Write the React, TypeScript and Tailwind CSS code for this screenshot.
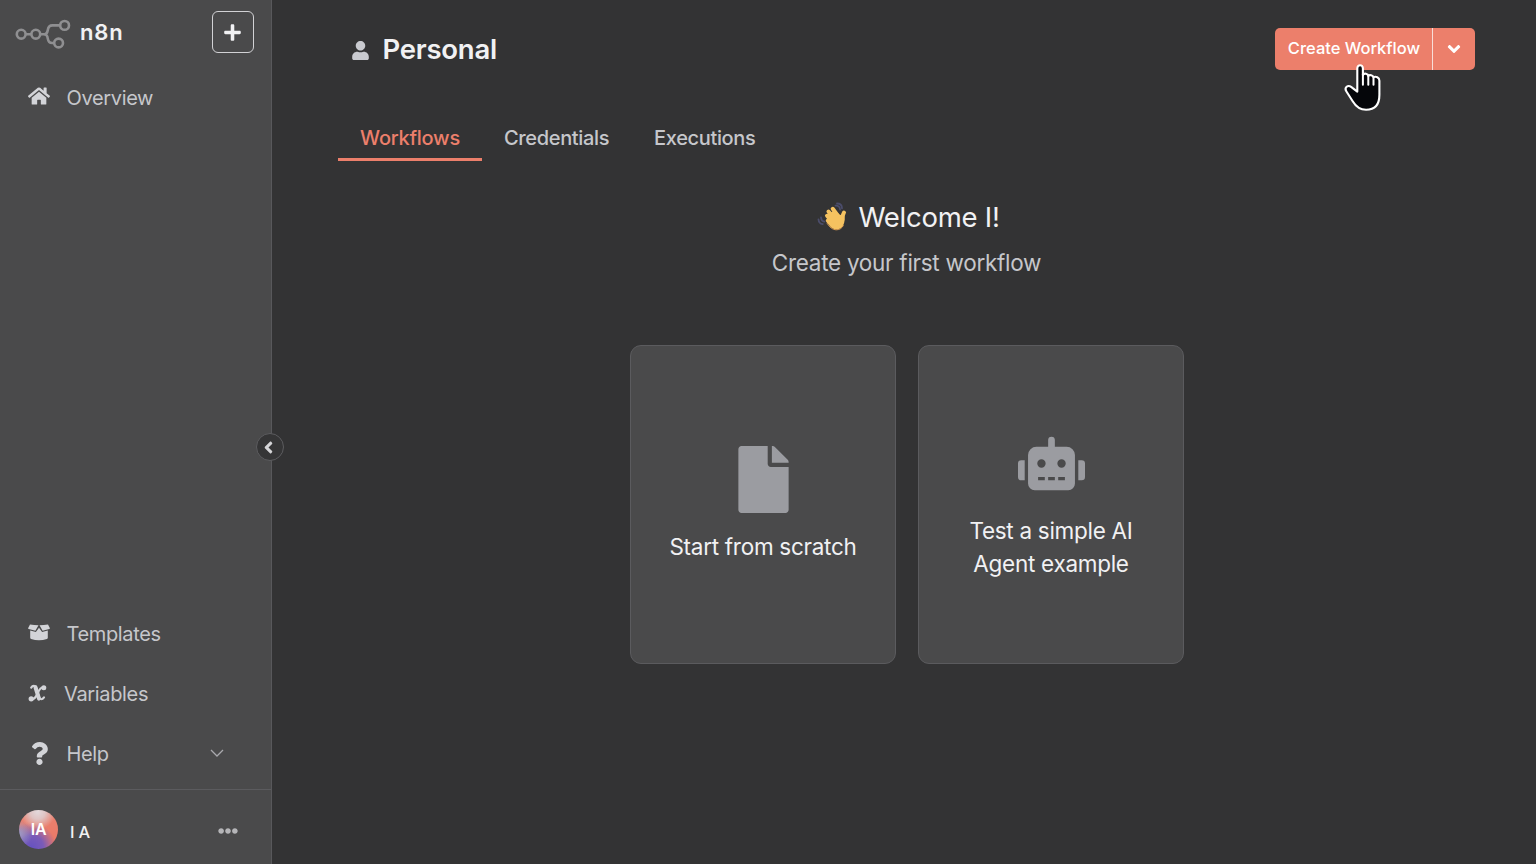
import type { ReactNode } from "react";
import {
  FaHome,
  FaUser,
  FaFile,
  FaRobot,
  FaQuestion,
  FaEllipsisH,
  FaPlus,
  FaAngleDown,
  FaAngleLeft,
} from "react-icons/fa";

function Logo() {
  return (
    <svg width="56" height="30" viewBox="0 0 56 30" fill="none" stroke="#8f8f91" strokeWidth="2.6">
      <circle cx="6.2" cy="15.2" r="4.4" />
      <circle cx="20.8" cy="15.2" r="4.4" />
      <circle cx="49.6" cy="6.4" r="4.4" />
      <circle cx="43.6" cy="24" r="4.4" />
      <path d="M10.6 15.2h5.8M25.2 15.2h4c2.6 0 3.2-1.6 3.6-4.2.4-3 1.700-4.600 4.600-4.600h7.800" />
      <path d="M29.200 15.200c2.600 0 3.200 1.800 3.600 4.400.4 2.900 1.800 4.400 4.400 4.400h2" />
    </svg>
  );
}

function OpenBoxIcon() {
  return (
    <svg width="22" height="17" viewBox="0 0 22 17" fill="currentColor">
      <path d="M2.200 6.600l5.700 1.500L11 3.700l3.100 4.400 5.700-1.500v7.200c0 .6-.3 1-.9 1.200-5.200 1.700-10.600 1.700-15.800 0-.6-.2-.9-.6-.9-1.200z" />
      <path d="M2 .5c2.800.6 5.600.8 8.500.8L7.400 6.700.7 5.100C.2 5 0 4.600.2 4.100zM20 .5c-2.800.6-5.600.8-8.500.8l3.100 5.400 6.700-1.600c.5-.1.700-.5.5-1z" />
    </svg>
  );
}

function VariableIcon() {
  return (
    <svg width="19" height="19" viewBox="0 0 19 19" fill="none" stroke="currentColor" strokeLinecap="round">
      <path d="M3.200 3.600C4.500 1.600 7.300 1 8.300 4l2.700 9c.8 3 3.300 2.800 5 .4" strokeWidth="2.200" />
      <path d="M7.500 3.300l3.500 11.400" strokeWidth="4" />
      <path d="M16 3.400c-3-1-4.500 1.800-6.200 5.600S6.300 16.200 3 15.200" strokeWidth="2.200" />
      <circle cx="15.800" cy="3.800" r="2.500" fill="currentColor" stroke="none" />
      <circle cx="3.200" cy="14.800" r="2.600" fill="currentColor" stroke="none" />
    </svg>
  );
}

function WavingHand() {
  return (
    <svg width="31" height="31" viewBox="0 0 31 31" fill="none">
      <g stroke="#4b4d6b" strokeWidth="1.800" strokeLinecap="round">
        <path d="M18.500 3.600c2.600-.3 4.300 1.200 4.600 4M20 1.500c3.200 0 5 2 5 4.800M1.500 17.500c.2 2.800 1.700 4.300 4.300 4.700M4 15.500c.2 2.600 1.400 3.900 3.400 4.200" />
      </g>
      <g stroke="#f5c260" strokeLinecap="round" strokeWidth="4">
        <path d="M11.500 9.600l8 9M15.700 6.800l7 9.500M10 13.800l7 8M10.800 18.600l6 5.200M27 10.500c-1.500 2-1.300 4.500-1.500 7" />
      </g>
      <path d="M12 12l5.500-4 5.500 5 3.500-1c1.500 5 1.600 9-1.200 12.700-3.200 3.500-8.200 3.600-11.600.2L9.500 20z" fill="#f5c260" />
      <path d="M10.200 21.500c2.300 3.500 5.200 6.300 9.300 6.300 3.200 0 5.600-1.700 6.800-4.300" stroke="#e9a552" strokeWidth=".9" strokeLinecap="round" />
    </svg>
  );
}

function HandCursor() {
  return (
    <svg width="40" height="50" viewBox="0 0 40 50" className="pointer-events-none absolute top-[62px] left-[1343px]">
      <path
        d="M14.300 6c0-4.300 5.600-4.300 5.600 0v6.400c1.200-2 5-1.500 5.400 1 1.300-1.400 4.600-.8 5.200 1.300 2.200-1.200 5.900.1 5.900 3.600v14c0 9.500-4.600 15-13.300 15-6.600 0-10.200-3.200-13.400-8.500L3.300 28.800c-2.300-3.700 1.600-6.800 4.800-4.400l6.200 4.700z"
        transform="translate(0 .5)"
        fill="#05060a"
        stroke="#fff"
        strokeWidth="2.100"
        strokeLinejoin="round"
      />
      <path d="M19.900 12v10.700M25.300 13.400v9.300M30.500 15v7.700" stroke="#fff" strokeWidth="2" strokeLinecap="round" />
    </svg>
  );
}

function NavItem({ icon, label, children }: { icon: ReactNode; label: ReactNode; children?: ReactNode }) {
  return (
    <a className="flex h-[59.500px] items-center pl-[27px] text-[20px] tracking-[-0.35px] text-[#c6c7cb]">
      <span className="flex w-6 shrink-0 justify-center text-[#d3d4d8]">{icon}</span>
      {label}
      {children}
    </a>
  );
}

function Sidebar() {
  return (
    <aside className="flex h-full w-[272px] shrink-0 flex-col border-r border-[#58585b] bg-[#4a4a4b]">
      <header className="flex h-[67px] items-center pl-[15px]">
        <Logo />
        <span className="mt-[-3px] ml-[9px] text-[22px] leading-none font-semibold tracking-[0.8px] text-[#f1f1f3]">n8n</span>
        <button className="mt-[-3px] mr-[17px] ml-auto flex size-[42px] items-center justify-center rounded-md border-[1.500px] border-[#d2d2d5] pr-px text-[#f1f1f3]">
          <FaPlus size={19} />
        </button>
      </header>
      <nav className="pt-px">
        <NavItem icon={<FaHome size={22} className="-mt-[3px]" />} label={<span className="ml-[15.500px]">Overview</span>} />
      </nav>
      <nav className="mt-auto pb-[6px]">
        <NavItem icon={<span className="-mt-[3px]"><OpenBoxIcon /></span>} label={<span className="ml-[15.500px]">Templates</span>} />
        <NavItem icon={<span className="-mt-px -ml-1"><VariableIcon /></span>} label={<span className="ml-[13px]">Variables</span>} />
        <NavItem icon={<FaQuestion size={23} />} label={<span className="ml-[15.500px] pt-px">Help</span>}>
          <svg width="14" height="8" viewBox="0 0 14 8" fill="none" stroke="#a9a9ad" strokeWidth="1.300" className="mr-[47px] ml-auto">
            <path d="M1 1l6 6 6-6" />
          </svg>
        </NavItem>
      </nav>
      <footer className="flex h-[75px] items-center border-t border-[#5b5b5e] pt-[5px] pl-[19px]">
        <span className="flex size-[39px] items-center justify-center rounded-full bg-[radial-gradient(circle_at_48%_4%,#e3d9dc_0%,#dfc4c4_18%,transparent_42%),radial-gradient(circle_at_0%_60%,#9a9bc8_0%,transparent_30%),radial-gradient(circle_at_32%_96%,#6652c0_0%,#7a5bb8_26%,transparent_54%),linear-gradient(#ea8270,#ea7765)] pb-px text-[16px] font-semibold tracking-[-0.2px] text-white">
          IA
        </span>
        <span className="mt-[5px] ml-[12px] text-[16.500px] font-medium tracking-[-0.2px] text-[#f1f1f3]">I A</span>
        <FaEllipsisH size={20} className="mt-[3px] mr-[33px] ml-auto text-[#b5b5b8]" />
      </footer>
    </aside>
  );
}

function StartCard({ icon, label }: { icon: ReactNode; label: string }) {
  return (
    <button className="flex h-[319px] w-[266px] flex-col items-center justify-center rounded-[11px] border border-[#5b5b5e] bg-[#4a4a4b] px-8 text-[#9b9ca1]">
      {icon}
      <span className="mt-[17px] text-[22.500px] leading-[33px] tracking-[-0.28px] text-[#f1f1f3]">{label}</span>
    </button>
  );
}

export default function App() {
  return (
    <div className="relative flex h-[864px] w-[1536px] overflow-hidden bg-[#333334] font-['Inter',sans-serif]">
      <Sidebar />
      <main className="flex flex-1 flex-col pr-[61px] pl-[66px]">
        <header className="flex h-[70px] items-end justify-between">
          <h1 className="flex h-10 items-center pl-[12.500px] text-[27.500px] font-semibold tracking-[-0.25px] text-[#f1f1f3]">
            <FaUser size={19} className="mr-[13px] text-[#c9cacf]" />
            Personal
          </h1>
          <div className="flex h-[42px] w-[200px] overflow-hidden rounded-[5px] bg-[#ec7f6b] text-white">
            <button className="w-[157px] pb-px pl-px text-[16.500px] font-medium">Create Workflow</button>
            <button className="flex flex-1 items-center justify-center border-l-[1.500px] border-[#f8ded9]">
              <FaAngleDown size={20} />
            </button>
          </div>
        </header>
        <nav className="mt-[46px] flex h-[45px] text-[20px] font-medium tracking-[-0.35px] text-[#c6c7cb]">
          <a className="h-full w-[144px] border-b-[3px] border-[#ec7f6b] pt-[7px] text-center leading-[30px] tracking-[-0.25px] text-[#ec7f6b]">Workflows</a>
          <a className="ml-[22px] pt-[7px] leading-[30px]">Credentials</a>
          <a className="ml-[45px] pt-[7px] leading-[30px]">Executions</a>
        </nav>
        <section className="flex flex-col items-center">
          <h2 className="mt-[36px] flex h-10 items-center gap-[10px] pl-1 text-[27.500px] tracking-[-0.25px] text-[#f1f1f3]">
            <WavingHand />
            <span className="pt-px">Welcome I!</span>
          </h2>
          <p className="mt-[9px] text-[22.500px] leading-[34px] tracking-[-0.28px] text-[#c6c7cb]">Create your first workflow</p>
          <div className="mt-[65px] flex gap-[22px] pl-px">
            <StartCard icon={<FaFile size={67} />} label="Start from scratch" />
            <StartCard icon={<FaRobot size={67} />} label="Test a simple AI Agent example" />
          </div>
        </section>
      </main>
      <button className="absolute top-[433px] left-[256px] flex size-7 items-center justify-center rounded-full border-[1.500px] border-[#5c5c5f] bg-[#353536] pr-[3px] text-[#d5d5d8]">
        <FaAngleLeft size={19} />
      </button>
      <HandCursor />
    </div>
  );
}
